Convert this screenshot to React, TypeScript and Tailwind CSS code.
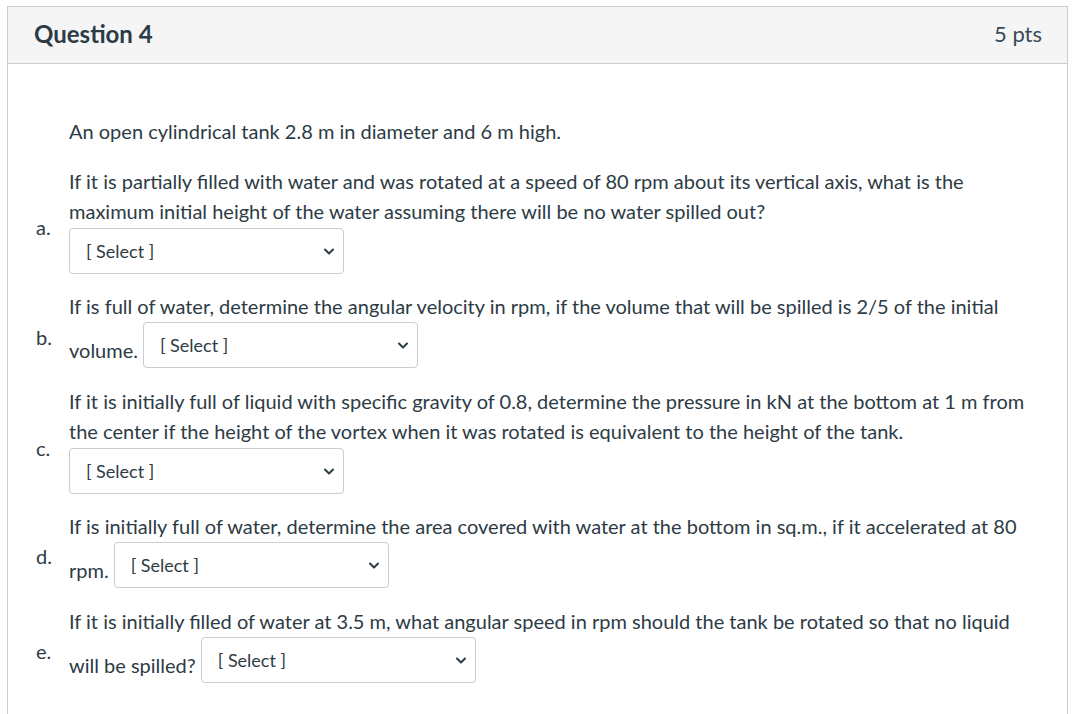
import React from 'react'

type Item = {
  label: string
  lines: string[]
  lead?: string
  labelTop: string
}

const items: Item[] = [
  {
    label: 'a.',
    lines: [
      'If it is partially filled with water and was rotated at a speed of 80 rpm about its vertical axis, what is the',
      'maximum initial height of the water assuming there will be no water spilled out?',
    ],
    labelTop: 'pt-[46px]',
  },
  {
    label: 'b.',
    lines: ['If is full of water, determine the angular velocity in rpm, if the volume that will be spilled is 2/5 of the initial'],
    lead: 'volume.',
    labelTop: 'pt-[31px]',
  },
  {
    label: 'c.',
    lines: [
      'If it is initially full of liquid with specific gravity of 0.8, determine the pressure in kN at the bottom at 1 m from',
      'the center if the height of the vortex when it was rotated is equivalent to the height of the tank.',
    ],
    labelTop: 'pt-[47px]',
  },
  {
    label: 'd.',
    lines: ['If is initially full of water, determine the area covered with water at the bottom in sq.m., if it accelerated at 80'],
    lead: 'rpm.',
    labelTop: 'pt-[30px]',
  },
  {
    label: 'e.',
    lines: ['If it is initially filled of water at 3.5 m, what angular speed in rpm should the tank be rotated so that no liquid'],
    lead: 'will be spilled?',
    labelTop: 'pt-[30px]',
  },
]

function SelectBox() {
  return (
    <div className="flex h-[46px] w-[275px] shrink-0 items-center justify-between rounded-[4px] border border-[#c7cdd1] bg-white pl-[16px] pr-[9px]">
      <span className="text-[18px] leading-[24px] text-[#2d3b45]">[ Select ]</span>
      <svg width="10" height="7" viewBox="0 0 10 7" fill="none">
        <path d="M1 1.5l4 4 4-4" stroke="#2d3b45" strokeWidth="2" strokeLinecap="round" strokeLinejoin="round" />
      </svg>
    </div>
  )
}

export default function App() {
  return (
    <div className="min-h-screen bg-white pl-[7px] pr-[13px] pt-[6px] font-['Lato',sans-serif] text-[#2d3b45]">
      <div className="h-[720px] border border-[#c7cdd1] border-b-0">
        {/* Header */}
        <div className="flex h-[57px] items-center justify-between border-b border-[#c7cdd1] bg-[#f5f5f5] pl-[26px] pr-[25px]">
          <h3 className="-mt-[2px] text-[24px] font-bold leading-[30px]">Question 4</h3>
          <span className="-mt-[2px] text-[22px] leading-[30px] text-[#394b58]">5 pts</span>
        </div>

        {/* Body */}
        <div className="pl-[28px] pt-[52px] text-[20px] leading-[30px]">
          <p className="pl-[33px]">An open cylindrical tank 2.8 m in diameter and 6 m high.</p>

          <div className="mt-[20px] flex flex-col gap-[17px]">
            {items.map((item) => (
              <div key={item.label} className="flex">
                <div className={`w-[33px] shrink-0 ${item.labelTop}`}>{item.label}</div>
                <div className="flex-1">
                  {item.lines.map((line) => (
                    <div key={line} className="whitespace-nowrap">{line}</div>
                  ))}
                  {item.lead ? (
                    <div className="mt-px flex items-start gap-[5px] pb-px">
                      <span className="mt-[13px] whitespace-nowrap">{item.lead}</span>
                      <SelectBox />
                    </div>
                  ) : (
                    <div className="mt-[2px]">
                      <SelectBox />
                    </div>
                  )}
                </div>
              </div>
            ))}
          </div>
        </div>
      </div>
    </div>
  )
}
